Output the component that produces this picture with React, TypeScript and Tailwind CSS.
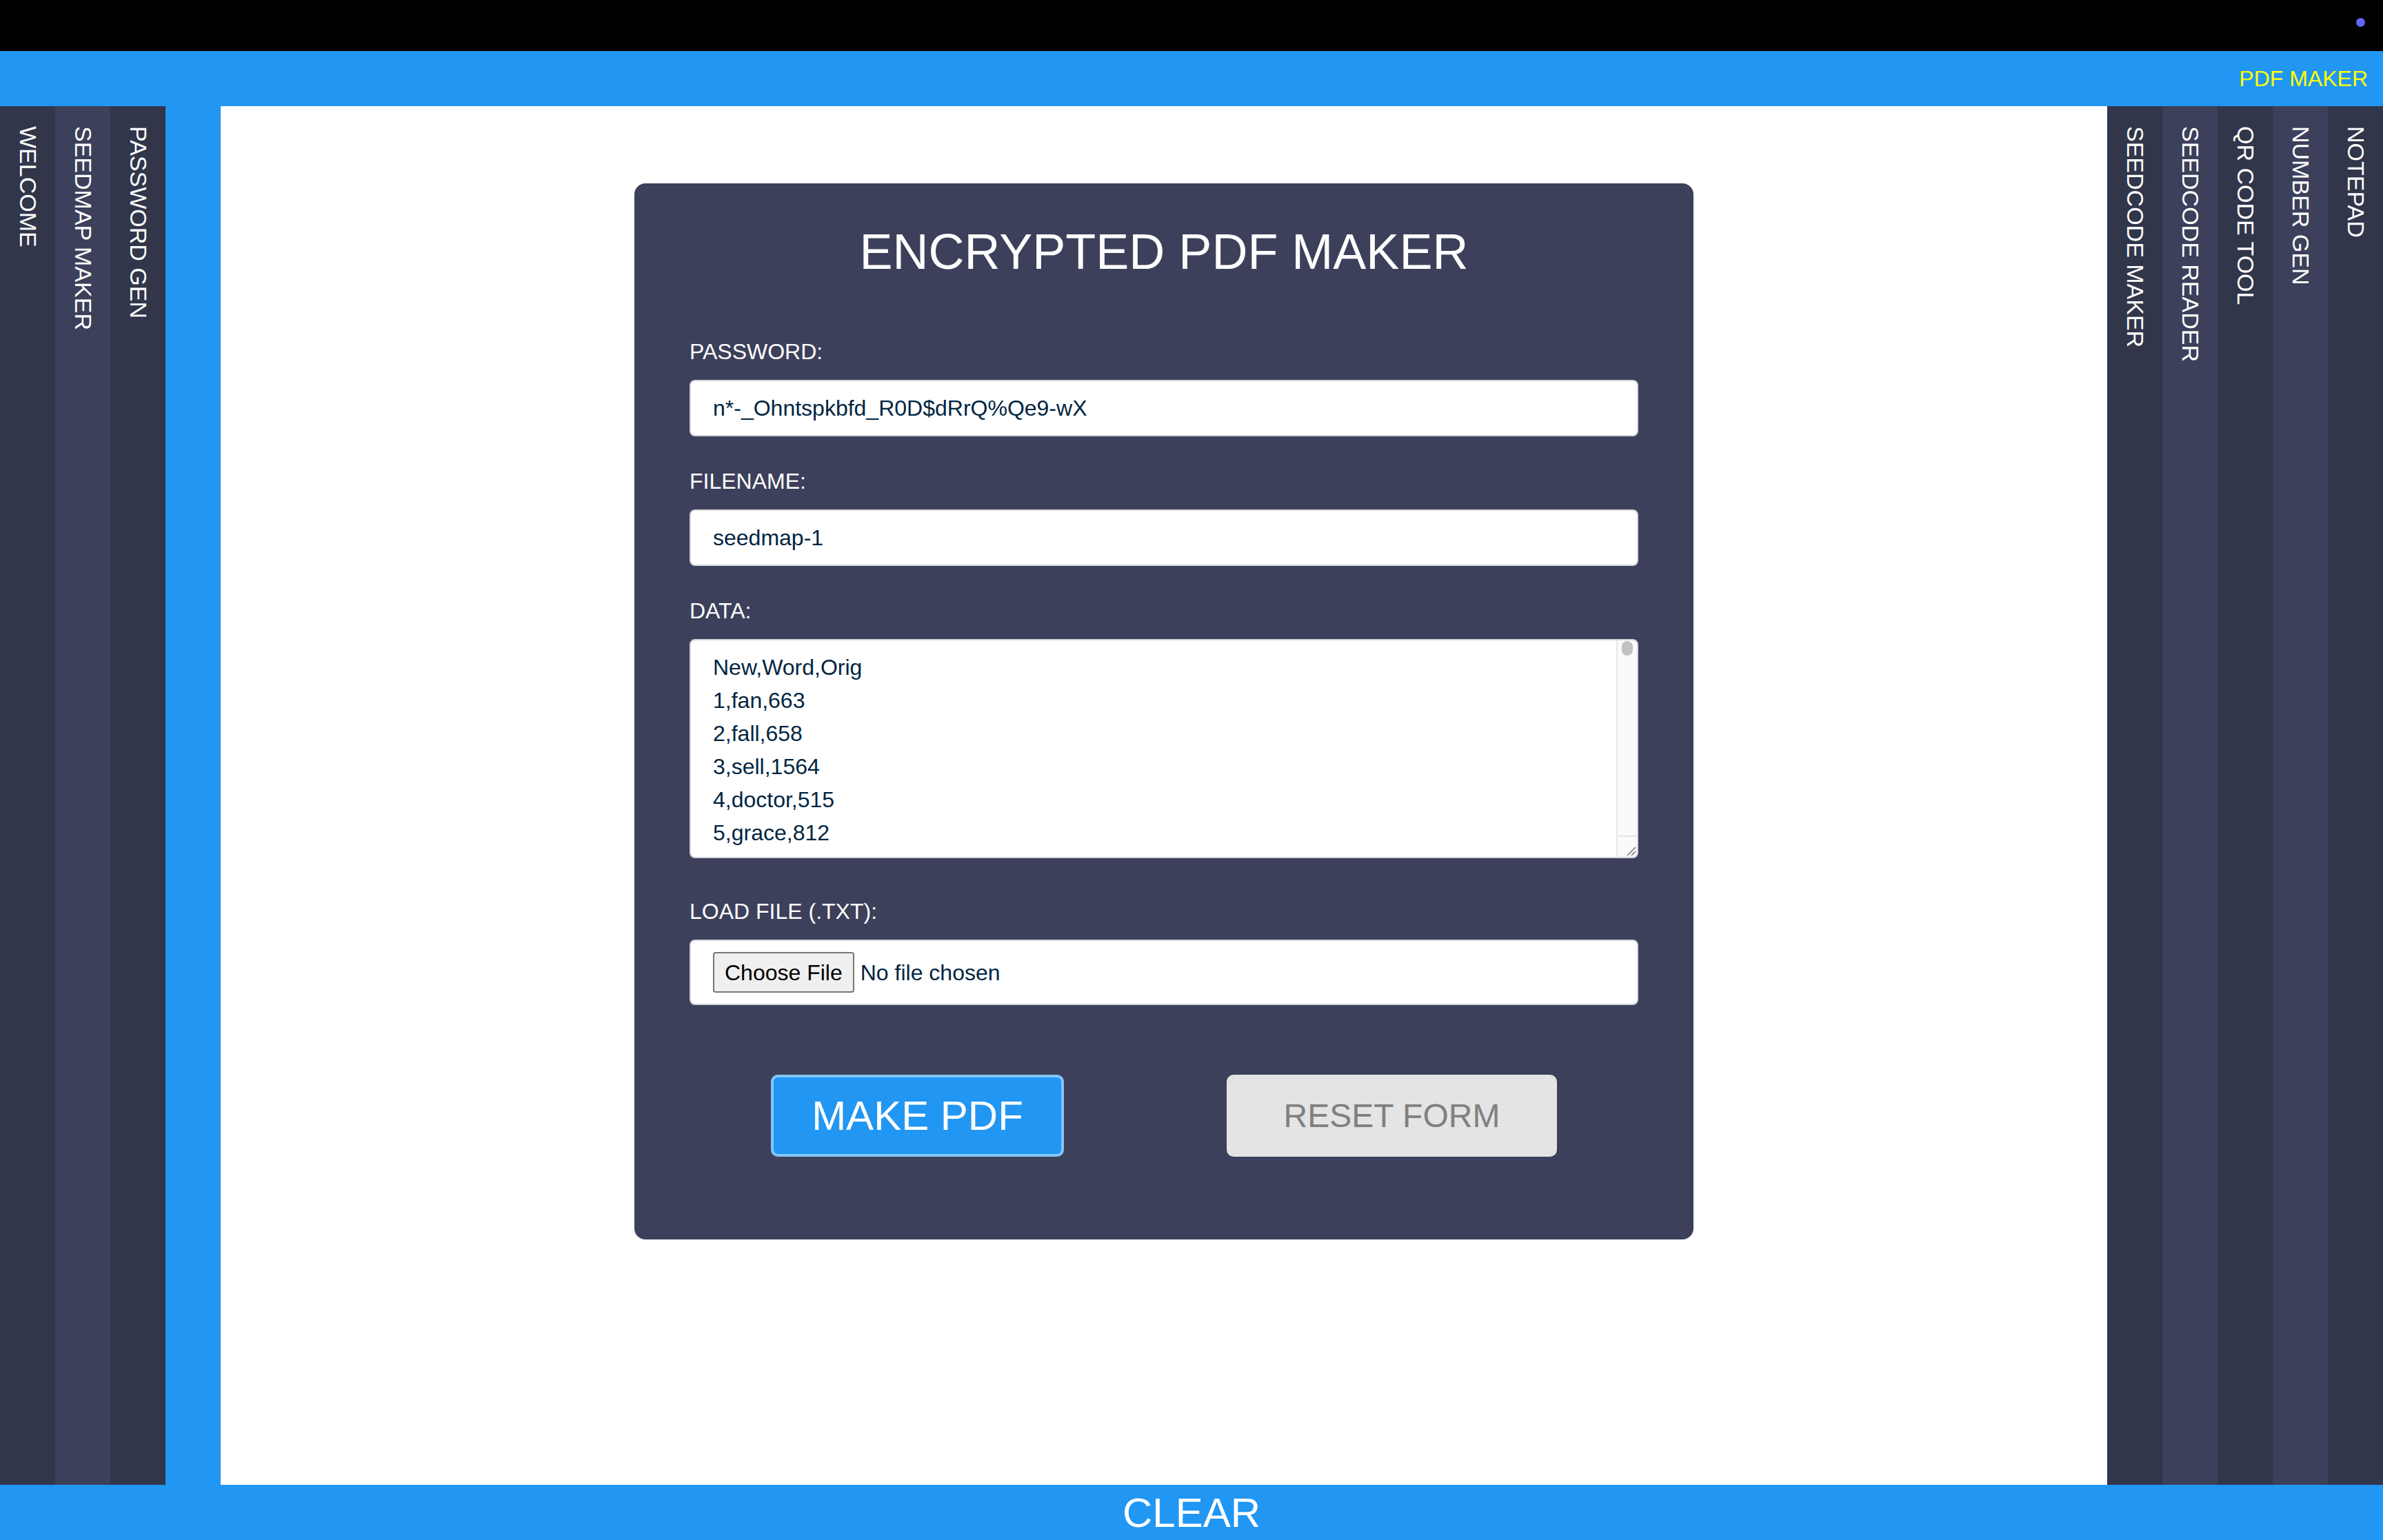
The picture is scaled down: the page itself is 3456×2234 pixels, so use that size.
import React from "react";

const leftTabs = [
  { t: "WELCOME", dark: true },
  { t: "SEEDMAP MAKER", dark: false },
  { t: "PASSWORD GEN", dark: true },
];

const rightTabs = [
  { t: "SEEDCODE MAKER", dark: true },
  { t: "SEEDCODE READER", dark: false },
  { t: "QR CODE TOOL", dark: true },
  { t: "NUMBER GEN", dark: false },
  { t: "NOTEPAD", dark: true },
];

const dataLines = [
  "New,Word,Orig",
  "1,fan,663",
  "2,fall,658",
  "3,sell,1564",
  "4,doctor,515",
  "5,grace,812",
  "6,bitter,182",
];

function Tab({ t, dark }: { t: string; dark: boolean }) {
  return (
    <div
      className={
        dark
          ? "w-[80px] h-full bg-[#31364a] flex justify-center pt-[29px]"
          : "w-[80px] h-full bg-[#3c405a] flex justify-center pt-[29px]"
      }
    >
      <span className="[writing-mode:vertical-rl] text-[34px] leading-[39px] text-white whitespace-nowrap">
        {t}
      </span>
    </div>
  );
}

function Label({ children, mt }: { children: React.ReactNode; mt: string }) {
  return (
    <div className={mt + " text-[32px] leading-[36px] text-white"}>{children}</div>
  );
}

export default function App() {
  return (
    <div className="w-[3456px] h-[2234px] flex flex-col overflow-hidden font-['Liberation_Sans',Arial,sans-serif]">
      {/* top black bar */}
      <div className="h-[74px] bg-black flex justify-end items-start pt-[26px] pr-[26px]">
        <div className="w-[13px] h-[13px] rounded-full bg-[#6366f1]" />
      </div>

      {/* header */}
      <div className="h-[80px] bg-[#2196f3] flex items-center justify-end pr-[22px]">
        <span className="text-[32px] leading-[37px] text-[#ffff00]">PDF MAKER</span>
      </div>

      {/* middle */}
      <div className="h-[2000px] flex">
        <div className="w-[320px] h-full bg-[#2196f3] flex">
          {leftTabs.map((x) => (
            <Tab key={x.t} t={x.t} dark={x.dark} />
          ))}
        </div>

        <div className="flex-1 h-full bg-white flex justify-center items-start pt-[112px]">
          <div className="w-[1536px] bg-[#3c405a] rounded-[16px] px-[80px] pt-[58px] pb-[120px] flex flex-col">
            <div className="text-[72px] leading-[82px] text-white text-center">
              ENCRYPTED PDF MAKER
            </div>

            <Label mt="mt-[86px]">PASSWORD:</Label>
            <input
              readOnly
              defaultValue="n*-_Ohntspkbfd_R0D$dRrQ%Qe9-wX"
              className="mt-[23px] w-full h-[82px] bg-white border-2 border-[#d4d6dc] rounded-[8px] px-[32px] text-[32px] text-[#002542] outline-none font-['Liberation_Sans',Arial,sans-serif]"
            />

            <Label mt="mt-[47px]">FILENAME:</Label>
            <input
              readOnly
              defaultValue="seedmap-1"
              className="mt-[23px] w-full h-[82px] bg-white border-2 border-[#d4d6dc] rounded-[8px] px-[32px] text-[32px] text-[#002542] outline-none font-['Liberation_Sans',Arial,sans-serif]"
            />

            <Label mt="mt-[47px]">DATA:</Label>
            <div className="mt-[23px] h-[318px] bg-white border-2 border-[#d4d6dc] rounded-[8px] flex overflow-hidden">
              <div className="flex-1 h-full overflow-hidden pt-[15px] pl-[32px] text-[32px] leading-[48px] text-[#002542]">
                {dataLines.map((l) => (
                  <div key={l}>{l}</div>
                ))}
              </div>
              <div className="w-[30px] bg-[#fafafa] border-l-2 border-[#e8e8e8] flex flex-col justify-between">
                <div className="mx-auto mt-[1px] w-[16px] h-[21px] rounded-full bg-[#c1c1c1]" />
                <div className="h-[31px] border-t-2 border-[#e4e4e4] flex items-end justify-end">
                  <svg width="28" height="28" viewBox="0 0 28 28">
                    <line x1="14" y1="26" x2="26" y2="14" stroke="#6b6b6b" strokeWidth="1.5" />
                    <line x1="20" y1="26" x2="26" y2="20" stroke="#6b6b6b" strokeWidth="1.5" />
                  </svg>
                </div>
              </div>
            </div>

            <Label mt="mt-[59px]">LOAD FILE (.TXT):</Label>
            <div className="mt-[23px] h-[95px] bg-white border-2 border-[#d4d6dc] rounded-[8px] px-[32px] flex items-center">
              <button className="h-[59px] px-[15px] bg-[#efefef] border-2 border-[#767676] rounded-[4px] text-[32px] leading-[36px] text-black font-['Liberation_Sans',Arial,sans-serif]">
                Choose File
              </button>
              <span className="ml-[9px] text-[32px] leading-[36px] text-[#002542]">No file chosen</span>
            </div>

            <div className="mt-[101px] flex justify-around">
              <button className="w-[425px] h-[119px] bg-[#2196f3] border-4 border-[#84c5fa] rounded-[10px] flex items-center justify-center text-[60px] leading-[69px] text-white font-['Liberation_Sans',Arial,sans-serif]">
                MAKE PDF
              </button>
              <button className="w-[479px] h-[119px] bg-[#e4e4e4] rounded-[10px] flex items-center justify-center text-[48px] leading-[55px] text-[#808080] font-['Liberation_Sans',Arial,sans-serif]">
                RESET FORM
              </button>
            </div>
          </div>
        </div>

        <div className="w-[400px] h-full flex">
          {rightTabs.map((x) => (
            <Tab key={x.t} t={x.t} dark={x.dark} />
          ))}
        </div>
      </div>

      {/* footer */}
      <div className="h-[80px] bg-[#2196f3] flex items-center justify-center">
        <span className="text-[60px] leading-[69px] text-white">CLEAR</span>
      </div>
    </div>
  );
}
